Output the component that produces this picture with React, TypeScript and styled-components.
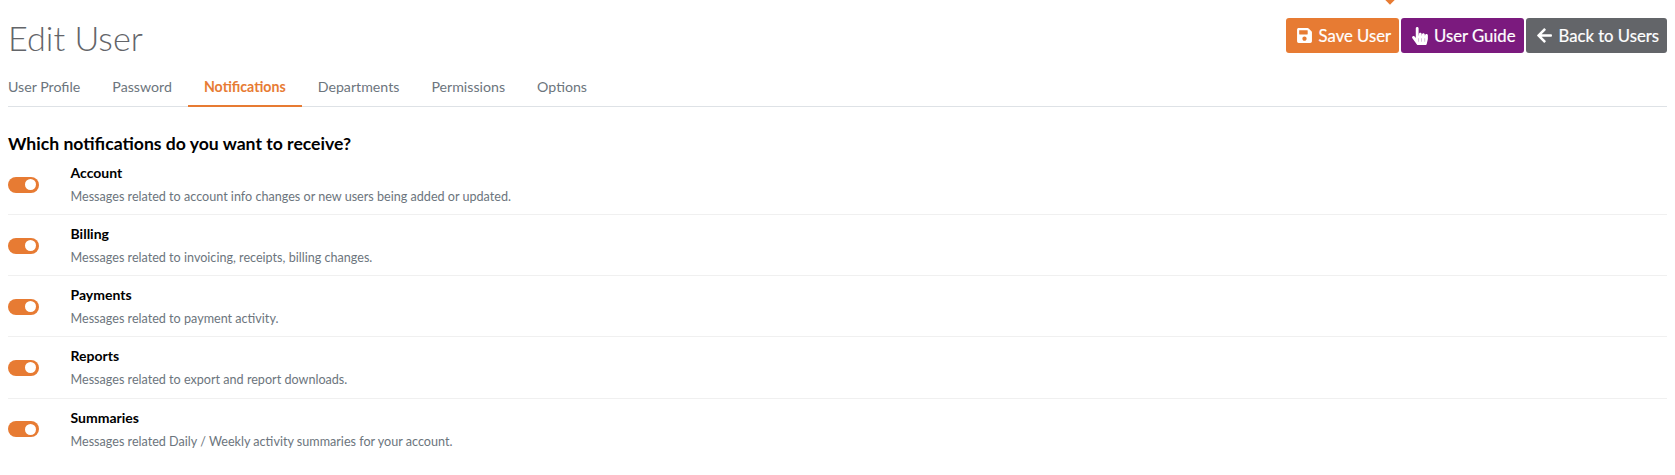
import styled, { createGlobalStyle } from 'styled-components';
import { FaSave, FaArrowLeft, FaHandPointer } from 'react-icons/fa';

const GlobalStyle = createGlobalStyle`
  html, body {
    margin: 0;
    padding: 0;
    background: #fff;
    font-family: Lato, "Liberation Sans", sans-serif;
  }
`;

const Page = styled.div`
  position: relative;
  width: 1675px;
  height: 475px;
  padding: 0 8px;
  box-sizing: border-box;
  overflow: hidden;
`;

const Caret = styled.div`
  position: absolute;
  left: 1386px;
  top: -5px;
  width: 8px;
  height: 8px;
  background: #e77b33;
  transform: rotate(45deg);
`;

const Header = styled.div`
  display: flex;
  justify-content: space-between;
  align-items: flex-start;
  padding-top: 18px;
  height: 46px;
`;

const Title = styled.h1`
  margin: -2px 0 0;
  font-size: 34.2px;
  line-height: 44px;
  font-weight: 300;
  color: #636569;
`;

const Actions = styled.div`
  display: flex;
  gap: 2px;
`;

const ActionButton = styled.div<{ $bg: string; $gap: number }>`
  display: flex;
  align-items: center;
  gap: ${(p) => p.$gap}px;
  height: 35px;
  padding: 0 8px 0 10px;
  border-radius: 3px;
  background: ${(p) => p.$bg};
  color: #fff;
  font-size: 16.7px;
  -webkit-text-stroke: 0.2px #fff;
`;

const Tabs = styled.div`
  display: flex;
  height: 42px;
  border-bottom: 1px solid #dee2e6;
`;

const Tab = styled.div<{ $active?: boolean }>`
  display: flex;
  align-items: center;
  padding: 4px 16px 0;
  font-size: 14.2px;
  font-weight: ${(p) => (p.$active ? 700 : 400)};
  color: ${(p) => (p.$active ? '#e77b33' : '#6c757d')};
  border-bottom: 2px solid ${(p) => (p.$active ? '#e77b33' : 'transparent')};
  height: 43px;
  box-sizing: border-box;
  &:first-child {
    padding-left: 0;
  }
`;

const Heading = styled.h2`
  margin: 27px 0 0;
  font-size: 17.6px;
  line-height: 20px;
  font-weight: 700;
  color: #000;
`;

const Row = styled.div`
  display: flex;
  align-items: center;
  height: 60.15px;
  margin-bottom: 1px;
  box-shadow: 0 1px 0 #f0f0f0;
  &:last-child {
    box-shadow: none;
  }
`;

const Toggle = styled.div`
  position: relative;
  width: 31px;
  height: 16px;
  margin-top: 1px;
  border-radius: 8px;
  background: #e77b33;
  margin-right: 31.5px;
  &::after {
    content: '';
    position: absolute;
    right: 3px;
    top: 2.5px;
    width: 11px;
    height: 11px;
    border-radius: 50%;
    background: #fff;
  }
`;

const RowText = styled.div`
  display: flex;
  flex-direction: column;
  gap: 8px;
`;

const RowTitle = styled.div`
  font-size: 14px;
  line-height: 17px;
  font-weight: 700;
  color: #000;
`;

const RowDesc = styled.div`
  font-size: 12.6px;
  line-height: 15px;
  color: #6c757d;
`;

const tabs = ['User Profile', 'Password', 'Notifications', 'Departments', 'Permissions', 'Options'];

const notifications = [
  { title: 'Account', desc: 'Messages related to account info changes or new users being added or updated.' },
  { title: 'Billing', desc: 'Messages related to invoicing, receipts, billing changes.' },
  { title: 'Payments', desc: 'Messages related to payment activity.' },
  { title: 'Reports', desc: 'Messages related to export and report downloads.' },
  { title: 'Summaries', desc: 'Messages related Daily / Weekly activity summaries for your account.' },
];

const App = () => (
  <Page>
    <GlobalStyle />
    <Caret />
    <Header>
      <Title>Edit User</Title>
      <Actions>
        <ActionButton $bg="#e77b33" $gap={6}><FaSave size={17} />Save User</ActionButton>
        <ActionButton $bg="#7b1a7e" $gap={5}><FaHandPointer size={18} />User Guide</ActionButton>
        <ActionButton $bg="#636569" $gap={6}><FaArrowLeft size={17} />Back to Users</ActionButton>
      </Actions>
    </Header>
    <Tabs>
      {tabs.map((t) => (
        <Tab key={t} $active={t === 'Notifications'}>{t}</Tab>
      ))}
    </Tabs>
    <Heading>Which notifications do you want to receive?</Heading>
    {notifications.map((n) => (
      <Row key={n.title}>
        <Toggle />
        <RowText>
          <RowTitle>{n.title}</RowTitle>
          <RowDesc>{n.desc}</RowDesc>
        </RowText>
      </Row>
    ))}
  </Page>
);

export default App;
